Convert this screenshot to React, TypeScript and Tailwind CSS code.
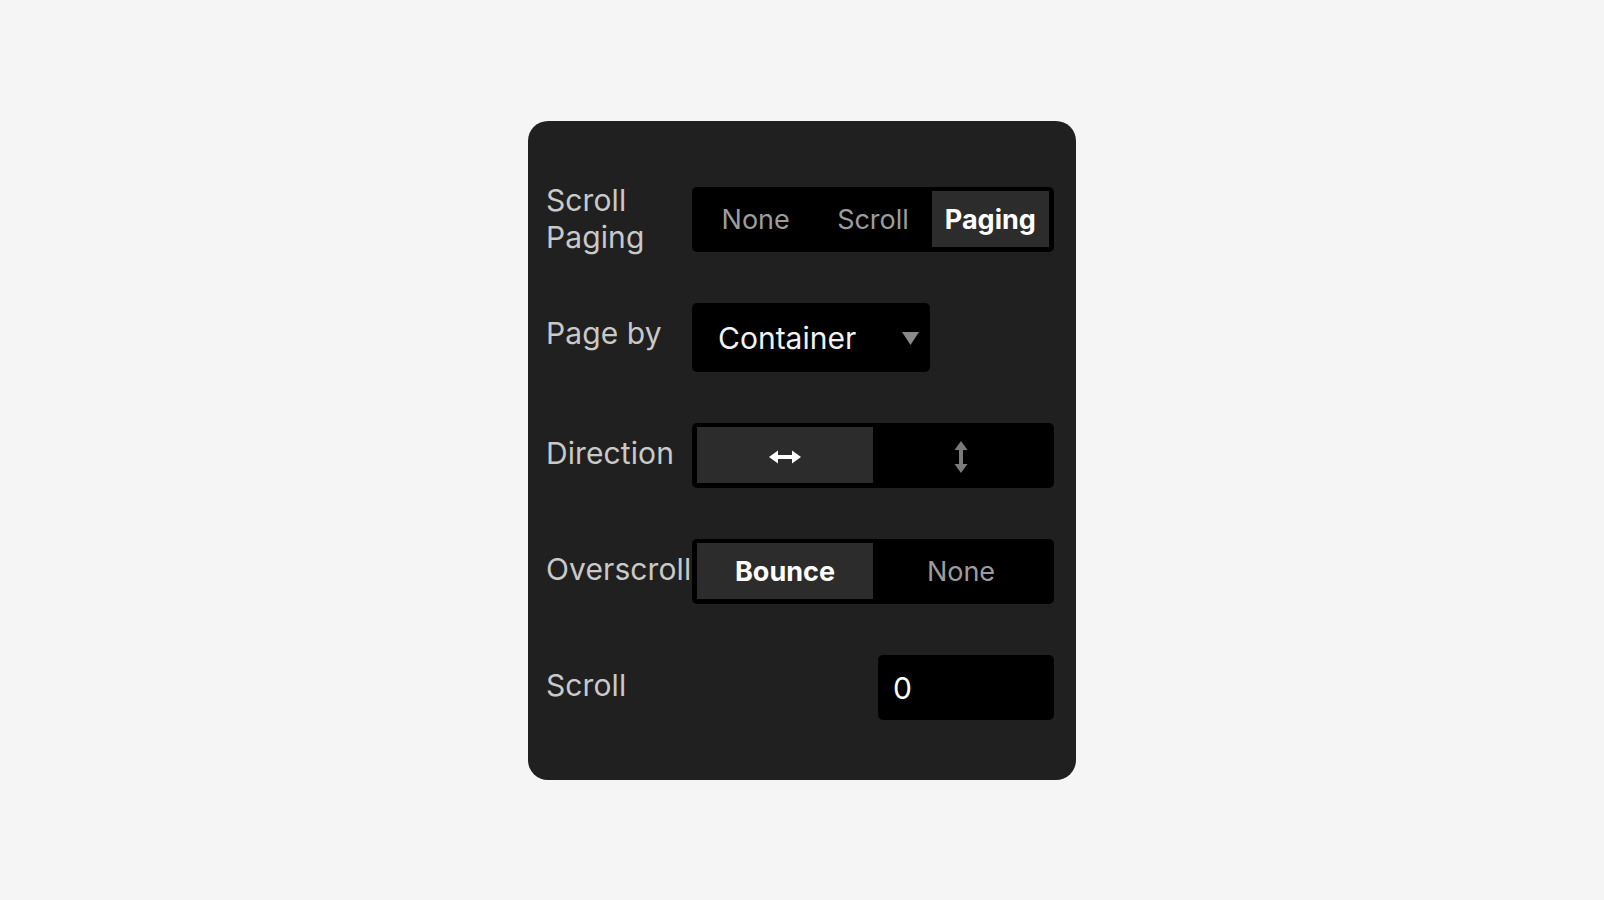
import { ReactNode } from "react";

const font = { fontFamily: "Inter, 'Noto Sans', sans-serif" };

function HArrow({ color }: { color: string }) {
  return (
    <svg width="32" height="14" viewBox="0 0 32 14" fill="none">
      <path d="M7 7H25" stroke={color} strokeWidth="4" />
      <path d="M0 7L9 0.5V13.5Z" fill={color} />
      <path d="M32 7L23 0.5V13.5Z" fill={color} />
    </svg>
  );
}

function VArrow({ color }: { color: string }) {
  return (
    <svg width="14" height="32" viewBox="0 0 14 32" fill="none">
      <path d="M7 7V25" stroke={color} strokeWidth="4" />
      <path d="M7 0L0.5 9H13.5Z" fill={color} />
      <path d="M7 32L0.5 23H13.5Z" fill={color} />
    </svg>
  );
}

function Row({
  label,
  children,
  h = "h-[65px]",
  labelClass = "mt-[12px] leading-[36px]",
}: {
  label: ReactNode;
  children: ReactNode;
  h?: string;
  labelClass?: string;
}) {
  return (
    <div className={`flex items-start ${h}`}>
      <div
        className={`w-[146px] shrink-0 text-[30px] tracking-[0.1px] text-[#c9c9c9] whitespace-nowrap ${labelClass}`}
      >
        {label}
      </div>
      <div className="flex-1 flex h-full">{children}</div>
    </div>
  );
}

function Segment({ options, active }: { options: ReactNode[]; active: number }) {
  return (
    <div className="w-full h-full bg-black rounded-[5px] p-[5px] pt-[4px] flex">
      {options.map((opt, i) => (
        <div
          key={i}
          className={`flex-1 flex items-center justify-center pt-[4px] text-[27px] ${
            i === active
              ? "bg-[#2c2c2c] text-white font-bold"
              : "text-[#9c9c9c]"
          }`}
        >
          {opt}
        </div>
      ))}
    </div>
  );
}

export default function App() {
  return (
    <div
      className="min-h-screen bg-[#f5f5f5] flex items-center justify-center"
      style={font}
    >
      <div className="w-[548px] h-[659px] bg-[#202020] rounded-[20px] pl-[18px] pr-[22px] pt-[66px] flex flex-col gap-[51px]">
        <Row
          labelClass="-mt-[5px] leading-[37px]"
          label={
            <>
              Scroll
              <br />
              Paging
            </>
          }
        >
          <Segment options={["None", "Scroll", "Paging"]} active={2} />
        </Row>

        <Row label="Page by" h="h-[69px]">
          <div className="w-[238px] h-full bg-black rounded-[5px] flex items-center justify-between pl-[26px] pr-[11px] pt-[2px]">
            <span className="text-[30px] text-[#f2f2f2]">Container</span>
            <svg width="17" height="13" viewBox="0 0 17 13">
              <path d="M0 0H17L8.5 13Z" fill="#8a8a8a" />
            </svg>
          </div>
        </Row>

        <Row label="Direction">
          <Segment
            options={[<HArrow color="#ffffff" />, <VArrow color="#7a7a7a" />]}
            active={0}
          />
        </Row>

        <Row label="Overscroll">
          <Segment options={["Bounce", "None"]} active={0} />
        </Row>

        <Row label="Scroll">
          <div className="w-full flex justify-end">
            <div className="w-[176px] h-full bg-black rounded-[5px] flex items-center pl-[15px] pt-[2px] text-[30px] text-white">
              0
            </div>
          </div>
        </Row>
      </div>
    </div>
  );
}
